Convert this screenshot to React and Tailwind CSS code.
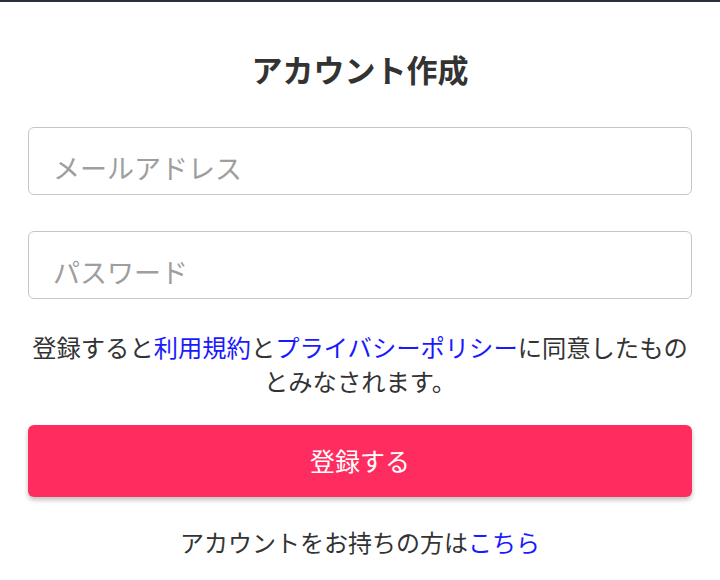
export default function App() {
  return (
    <div
      className="w-[720px] h-[580px] bg-white overflow-hidden"
      style={{ fontFamily: '"Noto Sans CJK JP", "Noto Sans", sans-serif' }}
    >
      <div className="h-[2px] bg-[#2b3040]" />
      <div className="px-[28px] pt-[44px]">
        <h1 className="text-center text-[31px] leading-[45px] font-bold text-[#333333]">
          アカウント作成
        </h1>
        <div className="mt-[36px] flex flex-col gap-[36px]">
          <input
            type="email"
            placeholder="メールアドレス"
            className="w-full h-[68px] rounded-[6px] border border-[#c6c6c6] pl-[24px] pr-[24px] pt-[12px] text-[27px] text-[#333] placeholder:text-[#9e9e9e] outline-none"
            style={{ fontFamily: 'inherit' }}
          />
          <input
            type="password"
            placeholder="パスワード"
            className="w-full h-[68px] rounded-[6px] border border-[#c6c6c6] pl-[24px] pr-[24px] pt-[12px] text-[27px] text-[#333] placeholder:text-[#9e9e9e] outline-none"
            style={{ fontFamily: 'inherit' }}
          />
        </div>
        <p className="mt-[31px] -mx-[4px] text-center text-[24.3px] leading-[34px] text-[#333333]">
          <span>登録すると</span>
          <a className="text-[#1a1aff]">利用規約</a>
          <span>と</span>
          <a className="text-[#1a1aff]">プライバシーポリシー</a>
          <span>に同意したものとみなされます。</span>
        </p>
        <button className="mt-[27px] w-full h-[72px] rounded-[6px] bg-[#ff2d5f] text-white text-[25px] shadow-[0_3px_5px_rgba(0,0,0,0.25)]">
          登録する
        </button>
        <p className="mt-[28px] text-center text-[24px] leading-[34px] text-[#333333]">
          アカウントをお持ちの方は<a className="text-[#1a1aff]">こちら</a>
        </p>
      </div>
    </div>
  );
}
